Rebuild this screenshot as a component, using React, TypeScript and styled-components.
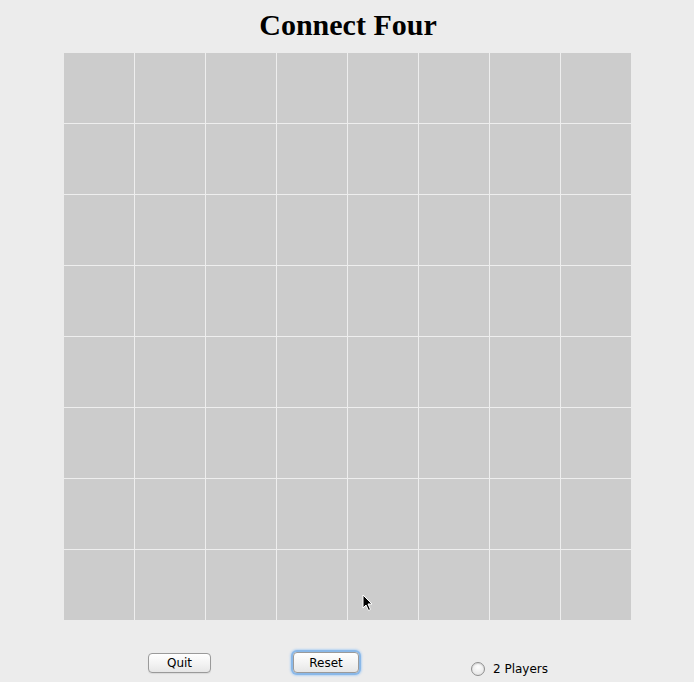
import React from "react";
import styled, { createGlobalStyle } from "styled-components";

const GlobalStyle = createGlobalStyle`
  html, body {
    margin: 0;
    padding: 0;
    background: #ececec;
  }
  body {
    font-family: "DejaVu Sans", "Liberation Sans", sans-serif;
  }
`;

const ROWS = 8;
const COLS = 8;

const Window = styled.div`
  width: 694px;
  height: 682px;
  display: flex;
  flex-direction: column;
  align-items: center;
  background: #ececec;
  position: relative;
  overflow: hidden;
`;

const Title = styled.h1`
  margin: 0;
  height: 53px;
  line-height: 50px;
  padding-left: 2px;
  font-family: "Liberation Serif", "Times New Roman", serif;
  font-size: 30px;
  font-weight: bold;
  color: #000;
`;

const Board = styled.div`
  display: grid;
  grid-template-columns: repeat(${COLS}, 70px);
  grid-template-rows: repeat(${ROWS}, 70px);
  gap: 1px;
  background: #eeeeee;
`;

const Cell = styled.div`
  background: #cccccc;
`;

const Controls = styled.div`
  align-self: stretch;
  display: flex;
  align-items: flex-start;
  padding: 33px 0 0 148px;
`;

const Button = styled.button<{ $focused?: boolean; $width: number; $gap: number }>`
  width: ${({ $width }) => $width}px;
  height: ${({ $focused }) => ($focused ? "21px" : "20px")};
  margin-top: ${({ $focused }) => ($focused ? "-1px" : "0")};
  margin-right: ${({ $gap }) => $gap}px;
  padding: 0;
  font-family: "DejaVu Sans", sans-serif;
  font-size: 12px;
  color: #000;
  background: linear-gradient(#ffffff, #f1f1f1 60%, #e6e6e6);
  border: 1px solid #9a9a9a;
  border-radius: 4px;
  box-shadow: ${({ $focused }) =>
    $focused ? "0 0 0 2px #8ab8e8, 0 0 2px 3px #b8d4f2" : "0 1px 1px rgba(0,0,0,0.08)"};
`;

const RadioLabel = styled.label`
  display: flex;
  align-items: center;
  gap: 8px;
  margin-top: 9px;
  font-size: 12px;
  color: #000;
`;

const RadioCircle = styled.span`
  width: 12px;
  height: 12px;
  border-radius: 50%;
  border: 1px solid #8f8f8f;
  background: radial-gradient(circle at 50% 35%, #ffffff, #e8e8e8 70%, #d6d6d6);
  box-shadow: inset 0 1px 1px rgba(0, 0, 0, 0.12);
`;

const Cursor = styled.svg`
  position: absolute;
  left: 362px;
  top: 594px;
`;

export default function App() {
  const cells = Array.from({ length: ROWS * COLS }, (_, i) => i);

  return (
    <>
      <GlobalStyle />
      <Window>
        <Title>Connect Four</Title>
        <Board>
          {cells.map((i) => (
            <Cell key={i} />
          ))}
        </Board>
        <Controls>
          <Button $width={63} $gap={82}>
            Quit
          </Button>
          <Button $width={66} $gap={112} $focused>
            Reset
          </Button>
          <RadioLabel>
            <RadioCircle />
            2 Players
          </RadioLabel>
        </Controls>
        <Cursor width="12" height="18" viewBox="0 0 12 18">
          <path
            d="M1 1 L1 14 L4 11 L6.5 16.5 L8.5 15.5 L6 10 L10 10 Z"
            fill="#000"
            stroke="#fff"
            strokeWidth="1"
            strokeLinejoin="round"
          />
        </Cursor>
      </Window>
    </>
  );
}
